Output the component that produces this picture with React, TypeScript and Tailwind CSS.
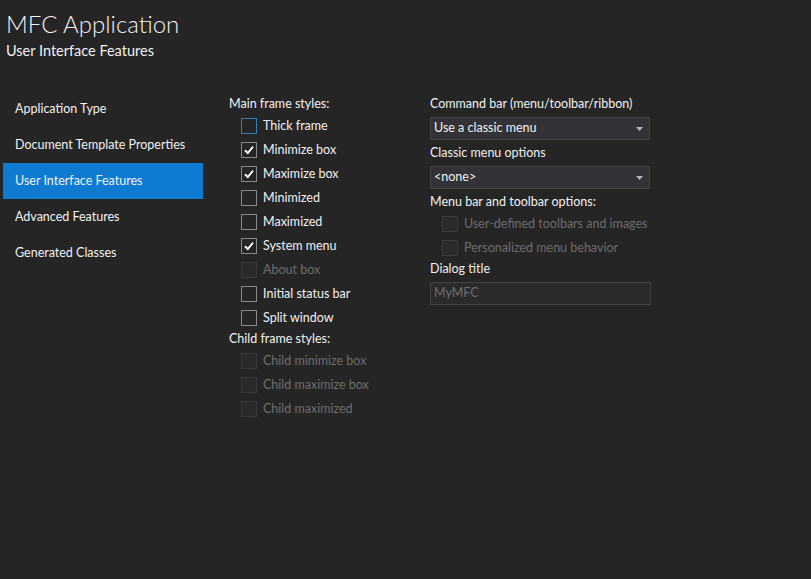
import React from "react";

type Item = { label: string; state: "checked" | "unchecked" | "focus" | "disabled" };

function Box({ state }: { state: Item["state"] }) {
  if (state === "disabled") {
    return <div className="w-[16px] h-[16px] border border-[#3a3a3d] bg-[#2a2a2c] shrink-0" />;
  }
  if (state === "focus") {
    return <div className="w-[16px] h-[16px] border border-[#2f7fb8] bg-[#252526] shrink-0" />;
  }
  return (
    <div className="w-[16px] h-[16px] border border-[#8a8a8a] bg-[#252526] shrink-0 flex items-center justify-center">
      {state === "checked" && (
        <svg width="12" height="12" viewBox="0 0 12 12">
          <path d="M2 6.3 L4.8 9 L10 2.6" fill="none" stroke="#ffffff" strokeWidth="1.9" />
        </svg>
      )}
    </div>
  );
}

function Check({ item }: { item: Item }) {
  return (
    <div className="h-[24px] flex items-center gap-[6px]">
      <Box state={item.state} />
      <span className={item.state === "disabled" ? "text-[#6d6d6d]" : "text-[#f1f1f1]"}>{item.label}</span>
    </div>
  );
}

function Select({ value }: { value: string }) {
  return (
    <div className="w-[220px] h-[23px] bg-[#333337] border border-[#434346] flex items-center justify-between pl-[3px] pr-[6px] text-[#f1f1f1]">
      <span>{value}</span>
      <svg width="7" height="4" viewBox="0 0 7 4">
        <path d="M0 0 H7 L3.5 4 Z" fill="#b8b8b8" />
      </svg>
    </div>
  );
}

export default function App() {
  const main: Item[] = [
    { label: "Thick frame", state: "focus" },
    { label: "Minimize box", state: "checked" },
    { label: "Maximize box", state: "checked" },
    { label: "Minimized", state: "unchecked" },
    { label: "Maximized", state: "unchecked" },
    { label: "System menu", state: "checked" },
    { label: "About box", state: "disabled" },
    { label: "Initial status bar", state: "unchecked" },
    { label: "Split window", state: "unchecked" },
  ];
  const child: Item[] = [
    { label: "Child minimize box", state: "disabled" },
    { label: "Child maximize box", state: "disabled" },
    { label: "Child maximized", state: "disabled" },
  ];
  const nav = [
    "Application Type",
    "Document Template Properties",
    "User Interface Features",
    "Advanced Features",
    "Generated Classes",
  ];
  return (
    <div
      className="w-[811px] h-[579px] bg-[#252526] text-[#f1f1f1] text-[12.5px] overflow-hidden"
      style={{ fontFamily: 'Lato, "Noto Sans", sans-serif' }}
    >
      <div className="pl-[6px] pt-[8px]">
        <div className="text-[24px] leading-[32px] font-light">MFC Application</div>
        <div className="text-[14.5px] leading-[20px] mt-[1px]">User Interface Features</div>
      </div>
      <div className="flex mt-[30px]">
        <div className="w-[200px] ml-[3px] flex flex-col">
          {nav.map((n) => (
            <div
              key={n}
              className={
                "h-[36px] flex items-center pl-[12px] " +
                (n === "User Interface Features" ? "bg-[#0e7ad0]" : "")
              }
            >
              {n}
            </div>
          ))}
        </div>
        <div className="ml-[26px] w-[201px] flex flex-col mt-[3px]">
          <div className="h-[20px] leading-[20px]">Main frame styles:</div>
          <div className="pl-[12px]">
            {main.map((m) => (
              <Check key={m.label} item={m} />
            ))}
          </div>
          <div className="h-[20px] leading-[20px] -mt-[1px]">Child frame styles:</div>
          <div className="pl-[12px]">
            {child.map((m) => (
              <Check key={m.label} item={m} />
            ))}
          </div>
        </div>
        <div className="flex flex-col mt-[3px]">
          <div className="h-[20px] leading-[20px] mb-[3px]">Command bar (menu/toolbar/ribbon)</div>
          <Select value="Use a classic menu" />
          <div className="h-[20px] leading-[20px] mt-[3px] mb-[3px]">Classic menu options</div>
          <Select value="<none>" />
          <div className="h-[20px] leading-[20px] mt-[3px]">Menu bar and toolbar options:</div>
          <div className="pl-[12px]">
            <Check item={{ label: "User-defined toolbars and images", state: "disabled" }} />
            <Check item={{ label: "Personalized menu behavior", state: "disabled" }} />
          </div>
          <div className="h-[20px] leading-[20px] -mt-[1px] mb-[3px]">Dialog title</div>
          <div className="w-[221px] h-[23px] bg-[#2a2a2c] border border-[#434346] flex items-center pl-[3px] text-[#6d6d6d]">
            MyMFC
          </div>
        </div>
      </div>
    </div>
  );
}
